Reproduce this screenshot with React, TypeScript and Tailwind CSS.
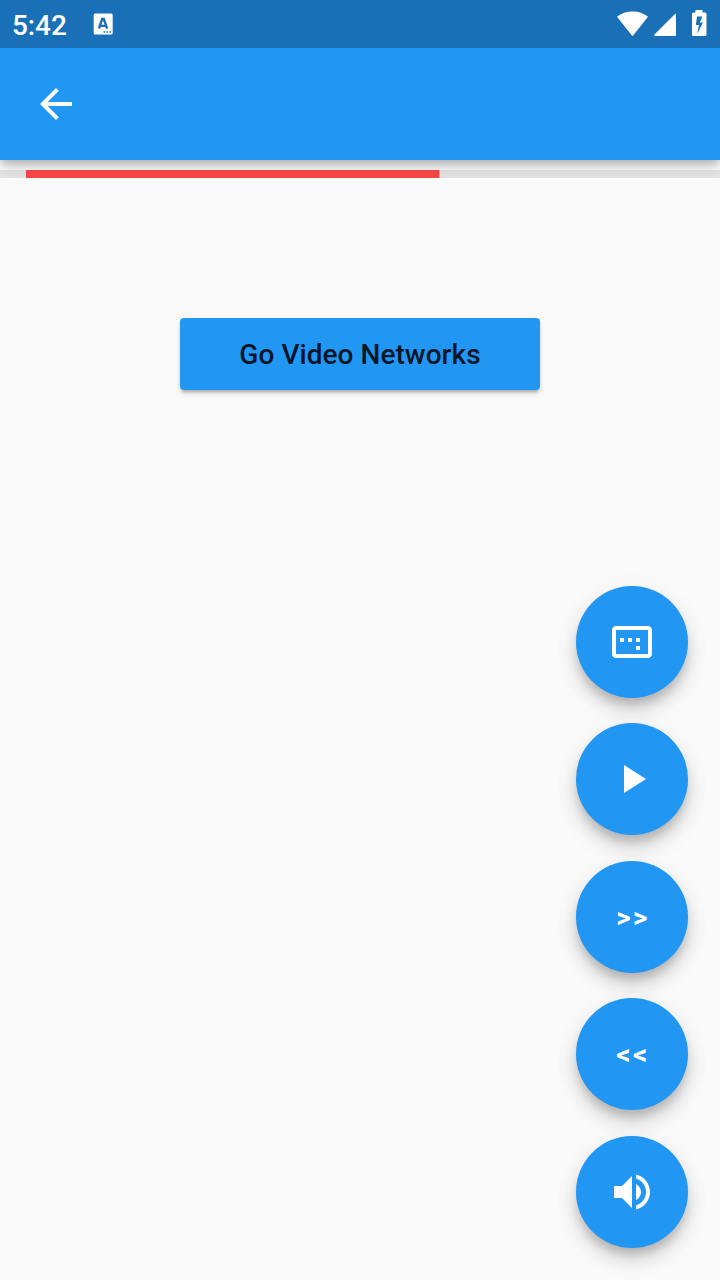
import type { ReactNode } from "react";

function Fab({ label, children }: { label: string; children: ReactNode }) {
  return (
    <button
      aria-label={label}
      className="flex h-[112px] w-[112px] items-center justify-center rounded-full bg-[#2196f3] text-white shadow-[0_8px_10px_-2px_rgba(0,0,0,0.16),0_12px_20px_0_rgba(0,0,0,0.15),0_4px_30px_0_rgba(0,0,0,0.04)]"
    >
      {children}
    </button>
  );
}

function MaterialIcon({ d }: { d: string }) {
  return (
    <svg viewBox="0 0 24 24" className="h-12 w-12" fill="currentColor">
      <path d={d} />
    </svg>
  );
}

function StatusBar() {
  return (
    <div className="flex h-12 items-center bg-[#1a70b7] text-white">
      <span className="ml-[12px] w-[81px] pt-[3px] text-[28px] leading-none font-medium tracking-[-0.100px]">5:42</span>
      <svg viewBox="0 0 20 22" className="h-[22px] w-5" fill="none">
        <rect x="0.700" y="0.500" width="19" height="21" rx="1.500" fill="#fff" />
        <path d="M5.900 15.500 9.200 6h1.600L14.100 15.500M7.300 12.800h5.400" stroke="#1a70b7" strokeWidth="2.300" />
        <path d="M10.500 19h1.700M13.500 19h1.700M16.500 19h1.700" stroke="#1a70b7" strokeWidth="1.700" />
      </svg>
      <svg viewBox="0 0 92 28" className="mr-[13px] mb-1 ml-auto h-7 w-[92px]" fill="#fff">
        <path d="M2 8.700Q8.500 3.500 17.500 3.500T33 8.700L18.300 27.300q-.800 1-1.600 0Z" />
        <path d="M40 28q-1.500-.500-.500-1.600L59.500 6.400q1.500-1.300 1.500.600V27q0 1-1 1Z" />
        <path
          fillRule="evenodd"
          d="M80.500 2h7v2.500h2.500q1.500 0 1.500 1.500v20.500q0 1.500-1.500 1.500h-11.500q-1.500 0-1.500-1.500V6q0-1.500 1.500-1.500h2ZM82 8.500 80.800 17H84L82.200 26 88 14.500H84.800L87.500 8.500Z"
        />
      </svg>
    </div>
  );
}

export default function App() {
  return (
    <div
      className="flex h-[1280px] w-[720px] flex-col overflow-hidden bg-[#fafafa]"
      style={{ fontFamily: 'Roboto, "Noto Sans", sans-serif' }}
    >
      <header className="relative z-10 shadow-[0_4px_8px_-2px_rgba(0,0,0,0.2),0_8px_10px_0_rgba(0,0,0,0.12),0_2px_16px_0_rgba(0,0,0,0.06)]">
        <StatusBar />
        <div className="flex h-28 items-center bg-[#2196f3] pl-8 text-white">
          <button aria-label="Back">
            <svg viewBox="0 0 24 24" className="h-12 w-12" fill="none" stroke="currentColor" strokeWidth="2">
              <path d="M20 12H5.500M12.700 4.700 5.400 12l7.300 7.300" />
            </svg>
          </button>
        </div>
      </header>

      <main className="flex flex-1 flex-col">
        <div className="mt-[10px] flex h-2 bg-[#e3e3e3]">
          <div className="ml-[26px] w-[413px] bg-[#f94747]" />
          <div className="w-px bg-[#ee9393]" />
        </div>
        <button className="mt-[140px] h-[72px] w-[360px] self-center rounded-[4px] bg-[#2196f3] pt-[2px] text-[28px] font-medium tracking-[0.050px] text-black/87 shadow-[0_4px_3px_-2px_rgba(0,0,0,0.18),0_3px_5px_0_rgba(0,0,0,0.16)]">
          Go Video Networks
        </button>
        <div className="mt-auto mr-8 mb-8 flex flex-col items-end gap-[25.600px]">
          <Fab label="Aspect ratio">
            <MaterialIcon d="M6 10h2v2H6zM10 10h2v2h-2zM14 10h2v2h-2zM14 14h2v2h-2zM20 4H4c-1.100 0-2 .900-2 2v12c0 1.100.900 2 2 2h16c1.100 0 2-.900 2-2V6c0-1.100-.900-2-2-2zm0 14H4V6h16v12z" />
          </Fab>
          <Fab label="Play">
            <MaterialIcon d="M8 5v14l11-7z" />
          </Fab>
          <Fab label="Forward">
            <span className="pt-[2px] pl-[2px] text-[28px] font-bold tracking-[2.400px]">&gt;&gt;</span>
          </Fab>
          <Fab label="Rewind">
            <span className="pt-[2px] pl-[2px] text-[28px] font-bold tracking-[2.400px]">&lt;&lt;</span>
          </Fab>
          <Fab label="Volume">
            <MaterialIcon d="M3 9v6h4l5 5V4L7 9H3zm13.500 3c0-1.770-1.020-3.290-2.500-4.030v8.050c1.480-.730 2.500-2.250 2.500-4.020zM14 3.230v2.060c2.890.860 5 3.540 5 6.710s-2.110 5.850-5 6.710v2.060c4.010-.910 7-4.490 7-8.770s-2.990-7.860-7-8.770z" />
          </Fab>
        </div>
      </main>
    </div>
  );
}
